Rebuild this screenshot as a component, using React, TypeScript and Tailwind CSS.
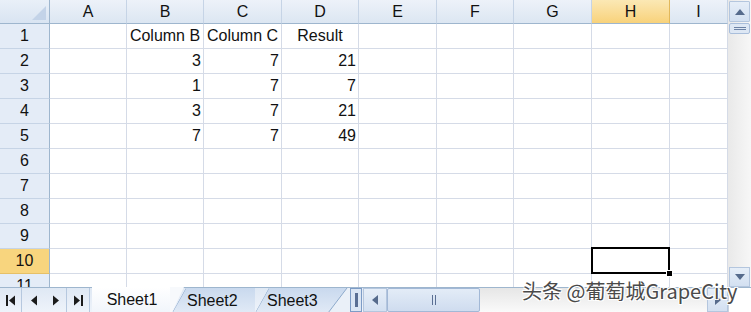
import React from 'react';

const cols = ['A', 'B', 'C', 'D', 'E', 'F', 'G', 'H', 'I'];

// cell values keyed by "col+row"
const cells: Record<string, { v: string; align: 'center' | 'right' }> = {
  B1: { v: 'Column B', align: 'center' },
  C1: { v: 'Column C', align: 'center' },
  D1: { v: 'Result', align: 'center' },
  B2: { v: '3', align: 'right' },
  C2: { v: '7', align: 'right' },
  D2: { v: '21', align: 'right' },
  B3: { v: '1', align: 'right' },
  C3: { v: '7', align: 'right' },
  D3: { v: '7', align: 'right' },
  B4: { v: '3', align: 'right' },
  C4: { v: '7', align: 'right' },
  D4: { v: '21', align: 'right' },
  B5: { v: '7', align: 'right' },
  C5: { v: '7', align: 'right' },
  D5: { v: '49', align: 'right' },
};

const rows = [1, 2, 3, 4, 5, 6, 7, 8, 9, 10, 11];

const Tri: React.FC<{ dir: 'up' | 'down' | 'left' | 'right'; className?: string }> = ({ dir, className }) => {
  const pts = {
    up: '0,6 5,0 10,6',
    down: '0,0 10,0 5,6',
    left: '6,0 6,10 0,5',
    right: '0,0 6,5 0,10',
  }[dir];
  const vb = dir === 'up' || dir === 'down' ? '0 0 10 6' : '0 0 6 10';
  const size = dir === 'up' || dir === 'down' ? 'w-[10px] h-[6px]' : 'w-[6px] h-[10px]';
  return (
    <svg viewBox={vb} className={`${size} ${className ?? ''}`}>
      <polygon points={pts} fill="currentColor" />
    </svg>
  );
};

export default function App() {
  return (
    <div
      className="relative w-[751px] h-[312px] overflow-hidden bg-white flex flex-col text-[#111]"
      style={{ fontFamily: '"Liberation Sans", Arial, sans-serif' }}
    >
      {/* Sheet + vertical scrollbar */}
      <div className="flex h-[287px] overflow-hidden">
        <div className="grid grid-cols-[50px_77px_77px_78px_77px_78px_77px_78px_78px_58px] grid-rows-[24px_repeat(11,25px)] w-[728px] content-start">
          {/* Corner */}
          <div className="relative border-r border-b border-[#9eb6ce] bg-gradient-to-b from-[#e9f0f8] to-[#d9e4f2]">
            <div className="absolute right-[3px] bottom-[3px] w-0 h-0 border-l-[14px] border-l-transparent border-b-[14px] border-b-[#c3d3e8]" />
          </div>
          {cols.map((c) => (
            <div
              key={c}
              className={`flex items-center justify-center text-[16px] border-b border-[#9eb6ce] border-r ${
                c === 'H'
                  ? 'bg-gradient-to-b from-[#fbe8b4] to-[#f8d27a] border-r-[#e2b85a]'
                  : 'bg-gradient-to-b from-[#edf2f9] to-[#dce6f2] border-r-[#c6d4e6]'
              }`}
            >
              {c}
            </div>
          ))}

          {rows.map((r) => (
            <React.Fragment key={r}>
              <div
                className={`flex items-center justify-center text-[16px] border-r border-b border-r-[#9eb6ce] ${
                  r === 10 ? 'bg-[#f8d57e] border-b-[#e6c067]' : 'bg-[#e4ecf7] border-b-[#c6d4e6]'
                }`}
              >
                {r}
              </div>
              {cols.map((c) => {
                const cell = cells[`${c}${r}`];
                const sel = c === 'H' && r === 10;
                return (
                  <div
                    key={c}
                    className={`relative flex items-center text-[16px] border-r border-b border-[#d5dbe7] px-[2px] ${
                      cell?.align === 'right' ? 'justify-end' : 'justify-center'
                    } ${sel ? 'z-10' : ''}`}
                  >
                    {cell?.v}
                    {sel && (
                      <>
                        <div className="absolute -left-px -top-[2px] -right-px -bottom-px border-2 border-black" />
                        <div className="absolute -right-[4px] -bottom-[4px] w-[7px] h-[7px] bg-black border border-white" />
                      </>
                    )}
                  </div>
                );
              })}
            </React.Fragment>
          ))}
        </div>

        {/* Vertical scrollbar */}
        <div className="w-[23px] flex flex-col bg-gradient-to-r from-[#e9e9e9] to-[#f7f7f7] pl-px">
          <div className="h-[21px] mt-px mr-px flex items-center justify-center border border-[#b4c6de] bg-gradient-to-b from-[#e6eef8] to-[#d3e0f1] text-[#566b8c] rounded-[1px]">
            <Tri dir="up" />
          </div>
          <div className="h-[11px] mt-px mr-px flex flex-col items-center justify-center gap-px border border-[#a9bedb] bg-[#dde7f4] rounded-[2px]">
            <div className="w-[12px] h-px bg-[#6d83a6]" />
            <div className="w-[12px] h-px bg-[#6d83a6]" />
          </div>
          <div className="flex-1" />
          <div className="h-[20px] mr-px flex items-center justify-center border border-[#b4c6de] bg-gradient-to-b from-[#e6eef8] to-[#d3e0f1] text-[#566b8c]">
            <Tri dir="down" />
          </div>
        </div>
      </div>

      {/* Tab bar */}
      <div className="flex h-[25px] bg-gradient-to-b from-[#dfe8f4] to-[#eef3fa] border-t border-[#9eb6ce]">
        {/* nav buttons */}
        <div className="flex w-[92px] items-center text-[#1b1b1b]">
          <div className="w-[22px] flex items-center justify-center gap-px border-r border-[#b6c8df] h-full">
            <div className="w-[2px] h-[11px] bg-current" />
            <Tri dir="left" className="h-[11px]" />
          </div>
          <div className="w-[23px] flex items-center justify-center h-full">
            <Tri dir="left" className="h-[11px]" />
          </div>
          <div className="w-[22px] flex items-center justify-center h-full border-r border-[#b6c8df]">
            <Tri dir="right" className="h-[11px]" />
          </div>
          <div className="w-[23px] flex items-center justify-center gap-px h-full border-r border-[#b6c8df]">
            <Tri dir="right" className="h-[11px]" />
            <div className="w-[2px] h-[11px] bg-current" />
          </div>
        </div>

        {/* sheet tabs */}
        <div className="flex h-full text-[16px] relative">
          <div className="relative z-20 w-[80px] -mt-px h-[25px] flex items-center justify-center bg-gradient-to-b from-[#ffffff] to-[#f1f5fb]">
            Sheet1
            <svg className="absolute -right-[12px] top-0 w-[14px] h-[25px]" viewBox="0 0 14 25">
              <polygon points="0,0 0,25 2,25 14,0" fill="#f7f9fc" />
            </svg>
          </div>
          <div className="relative z-10 w-[83px] h-[25px] flex items-center bg-gradient-to-b from-[#c9d9ee] to-[#e1eaf6] [clip-path:polygon(14px_0,100%_0,100%_100%,0_100%)] pl-[15px]">
            Sheet2
            <svg className="absolute left-0 top-0 w-[14px] h-[25px]" viewBox="0 0 14 25">
              <line x1="0" y1="25" x2="14" y2="0" stroke="#8eaacb" strokeWidth="1" />
            </svg>
          </div>
          <div className="relative w-[95px] h-[25px] flex items-center bg-gradient-to-b from-[#c9d9ee] to-[#e1eaf6] [clip-path:polygon(14px_0,100%_0,100%_100%,0_100%)] pl-[12px]">
            Sheet3
            <svg className="absolute left-0 top-0 w-[14px] h-[25px]" viewBox="0 0 14 25">
              <line x1="0" y1="25" x2="14" y2="0" stroke="#8eaacb" strokeWidth="1" />
            </svg>
            <svg className="absolute right-0 top-0 w-[22px] h-[25px]" viewBox="0 0 22 25">
              <polygon points="0,25 19,0 22,0 22,25" fill="#eaf0f8" />
              <line x1="0" y1="25" x2="19" y2="0" stroke="#8eaacb" strokeWidth="1" />
            </svg>
          </div>
        </div>

        {/* splitter */}
        <div className="w-[12px] h-[24px] flex items-center justify-center border border-[#7d9cc6] bg-[#dbe6f4]">
          <div className="w-[3px] h-[14px] bg-[#5a6f93]" />
        </div>
        {/* h scroll */}
        <div className="w-[24px] h-[24px] ml-px flex items-center justify-center border border-[#b4c6de] bg-gradient-to-b from-[#e6eef8] to-[#d3e0f1] text-[#566b8c]">
          <Tri dir="left" />
        </div>
        <div className="w-[93px] h-[24px] flex items-center justify-center gap-[2px] border border-[#a2b8d6] bg-gradient-to-b from-[#e3ecf7] to-[#cfdcef] rounded-[2px]">
          <div className="w-px h-[10px] bg-[#5a6f93]" />
          <div className="w-px h-[10px] bg-[#5a6f93]" />
        </div>
        <div className="flex-1 bg-gradient-to-b from-[#e6e6e6] to-[#fafafa]" />
        <div className="w-[21px] h-[24px] flex items-center justify-center border border-[#b4c6de] bg-gradient-to-b from-[#e6eef8] to-[#d3e0f1] text-[#566b8c]">
          <Tri dir="right" />
        </div>
        <div className="w-[23px] h-full bg-white border-l border-[#c9d3df]" />
      </div>

      {/* watermark overlay */}
      <div
        className="absolute left-[522px] top-[281px] text-[20px] leading-none text-[#4a4a4a] whitespace-nowrap"
        style={{
          fontFamily: '"Noto Sans CJK SC", "Liberation Sans", sans-serif',
          textShadow: '1px 1px 0 #fff, -1px -1px 0 #fff, 1px -1px 0 #fff, -1px 1px 0 #fff',
        }}
      >
        头条 @葡萄城GrapeCity
      </div>
    </div>
  );
}
